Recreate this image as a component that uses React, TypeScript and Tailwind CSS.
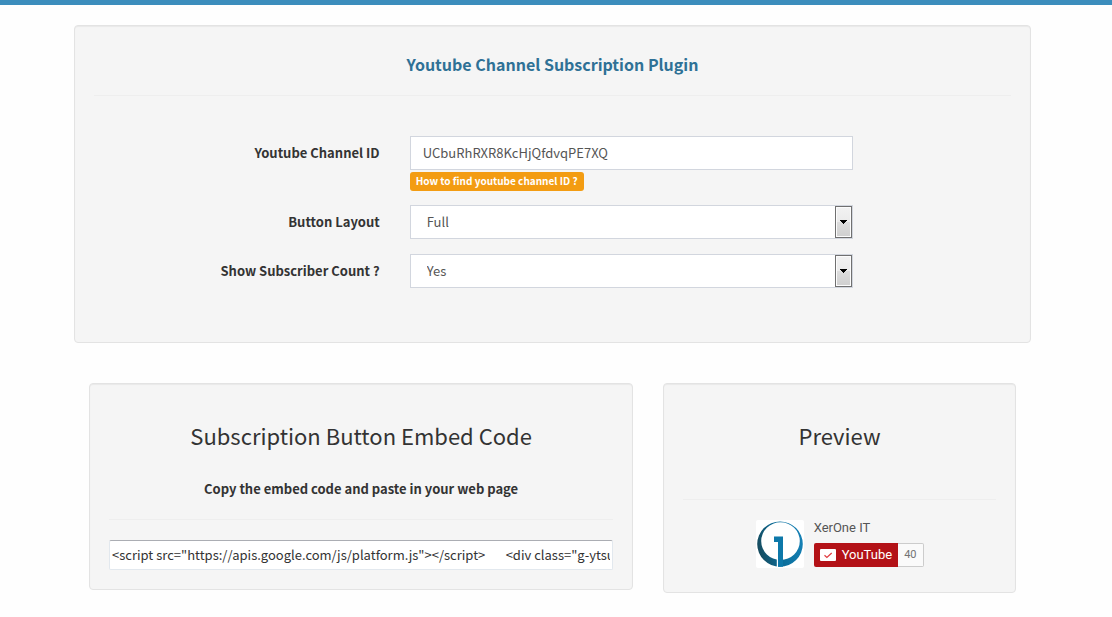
import React, { useState } from "react";

const CARD =
  "rounded-[4px] border border-[#e3e3e3] bg-[#f5f5f5] p-[19px] shadow-[inset_0_1px_1px_rgba(0,0,0,0.05)]";

const EMBED_CODE =
  '<script src="https://apis.google.com/js/platform.js"></script>       <div class="g-ytsubscribe" data-channelid="UCbuRhRXR8KcHjQfdvqPE7XQ" data-layout="full" data-count="default"></div>';

type SelectRowProps = {
  id: string;
  label: string;
  options: string[];
};

function SelectRow({ id, label, options }: SelectRowProps) {
  return (
    <div className="-mx-[15px] grid grid-cols-12">
      <label htmlFor={id} className="col-span-4 px-[15px] pt-[7px] text-right font-bold">
        {label}
      </label>
      <div className="col-span-6 px-[15px]">
        <div className="relative">
          <select
            id={id}
            className="block h-[34px] w-full appearance-none border border-[#d2d6de] bg-white pr-6 pl-4 text-[#555555]"
          >
            {options.map((o) => (
              <option key={o}>{o}</option>
            ))}
          </select>
          <span className="pointer-events-none absolute inset-y-px right-px flex w-[17px] items-center justify-center border border-[#707070] bg-[linear-gradient(#f2f2f2_0%,#ebebeb_50%,#dddddd_50%,#cfcfcf_100%)] shadow-[inset_0_0_0_1px_#fcfcfc]">
            <svg width="7" height="4" viewBox="0 0 7 4" shapeRendering="crispEdges">
              <path d="M0 0h7v1H6v1H5v1H4v1H3V3H2V2H1V1H0z" fill="#000" />
            </svg>
          </span>
        </div>
      </div>
    </div>
  );
}

function ChannelLogo() {
  return (
    <svg width="48" height="48" viewBox="0 0 48 48" className="rounded-[2px]" role="img" aria-label="XerOne IT">
      <defs>
        <linearGradient id="ring" x1="0" y1="0.6" x2="1" y2="0.4">
          <stop offset="0" stopColor="#174a5c" />
          <stop offset="0.5" stopColor="#0b6f9c" />
          <stop offset="1" stopColor="#1580b5" />
        </linearGradient>
      </defs>
      <rect width="48" height="48" fill="#fff" />
      <path
        fillRule="evenodd"
        fill="url(#ring)"
        d="M24 1.500a22.800 22.600 0 1 1 0 45.200a22.800 22.600 0 1 1 0-45.200zM24.500 2.300a19.300 18.800 0 1 0 0 37.600a19.300 18.800 0 1 0 0-37.600z"
      />
      <path d="M20.800 38h1.200v9h-1.200z" fill="#fff" />
      <path d="M18 16.500h9v30.200h-5V22h-4z" fill="#0d78a9" />
    </svg>
  );
}

export default function App() {
  const [channel, setChannel] = useState("UCbuRhRXR8KcHjQfdvqPE7XQ");

  return (
    <div className="min-h-screen border-t-[5px] border-[#3c8dbc] bg-[#fefefe] font-['Noto_Sans_CJK_SC',sans-serif] text-[13px] leading-5 text-[#333333]">
      <main className="pt-5 pr-[81px] pb-6 pl-[74px]">
        <section className={`${CARD} pb-[54px]`}>
          <h1 className="pt-[9px] text-center text-[16px] font-bold text-[#2f7196]">
            Youtube Channel Subscription Plugin
          </h1>
          <hr className="mt-[21px] mb-10 border-[#eeeeee]" />
          <form className="flex flex-col gap-[14px]" onSubmit={(e) => e.preventDefault()}>
            <div className="-mx-[15px] grid grid-cols-12">
              <label htmlFor="channel" className="col-span-4 px-[15px] pt-[7px] text-right font-bold">
                Youtube Channel ID
              </label>
              <div className="col-span-6 px-[15px]">
                <input
                  id="channel"
                  type="text"
                  value={channel}
                  onChange={(e) => setChannel(e.target.value)}
                  className="block h-[34px] w-full border border-[#d2d6de] bg-white px-3 pb-0.5 text-[#555555]"
                />
                <a
                  href="#help"
                  className="mt-0.5 block h-[19px] w-fit rounded-[3px] bg-[#f39c12] px-1.5 text-[10px] leading-[18px] font-bold text-white"
                >
                  How to find youtube channel ID ?
                </a>
              </div>
            </div>
            <div className="flex flex-col gap-[15px]">
              <SelectRow id="layout" label="Button Layout" options={["Full", "Default"]} />
              <SelectRow id="count" label="Show Subscriber Count ?" options={["Yes", "No"]} />
            </div>
          </form>
        </section>

        <div className="mt-10 grid grid-cols-[3fr_2fr] items-start">
          <div className="min-w-0 px-[15px]">
            <section className={CARD}>
              <h2 className="pt-[19px] text-center text-[22px] leading-[26px]">Subscription Button Embed Code</h2>
              <label htmlFor="embed" className="mt-[31px] block text-center font-bold">
                Copy the embed code and paste in your web page
              </label>
              <hr className="my-5 border-[#eeeeee]" />
              <input
                id="embed"
                type="text"
                readOnly
                value={EMBED_CODE}
                className="block h-[30px] w-full rounded-[2px] border border-[#e2e8ee] border-t-[#abadb3] bg-white px-0.5 pb-0.5"
              />
            </section>
          </div>

          <div className="min-w-0 px-[15px]">
            <section className={`${CARD} pb-6`}>
              <h2 className="pt-[19px] text-center text-[22px] leading-[26px]">Preview</h2>
              <hr className="mt-[51px] mb-5 border-[#eeeeee]" />
              <div className="flex justify-center gap-[10px] font-['Roboto',sans-serif]">
                <ChannelLogo />
                <div className="flex flex-col gap-2">
                  <span className="text-[13px] leading-[15px] text-[#555555]">XerOne IT</span>
                  <div className="flex h-6">
                    <button
                      type="button"
                      className="flex items-center gap-1.5 rounded-l-[2px] bg-[#b31217] px-1.5 text-[13px] text-white"
                    >
                      <svg width="16" height="12" viewBox="0 0 16 12">
                        <rect width="16" height="12" rx="1" fill="#fff" />
                        <path d="M4.500 6.300l2.400 2.200 4.800-4.500" fill="none" stroke="#e0393e" strokeWidth="1.200" />
                      </svg>
                      YouTube
                    </button>
                    <span className="flex items-center rounded-r-[2px] border border-l-0 border-[#cccccc] bg-[#fafafa] px-1.5 text-[11px] text-[#737373]">
                      40
                    </span>
                  </div>
                </div>
              </div>
            </section>
          </div>
        </div>
      </main>
    </div>
  );
}
